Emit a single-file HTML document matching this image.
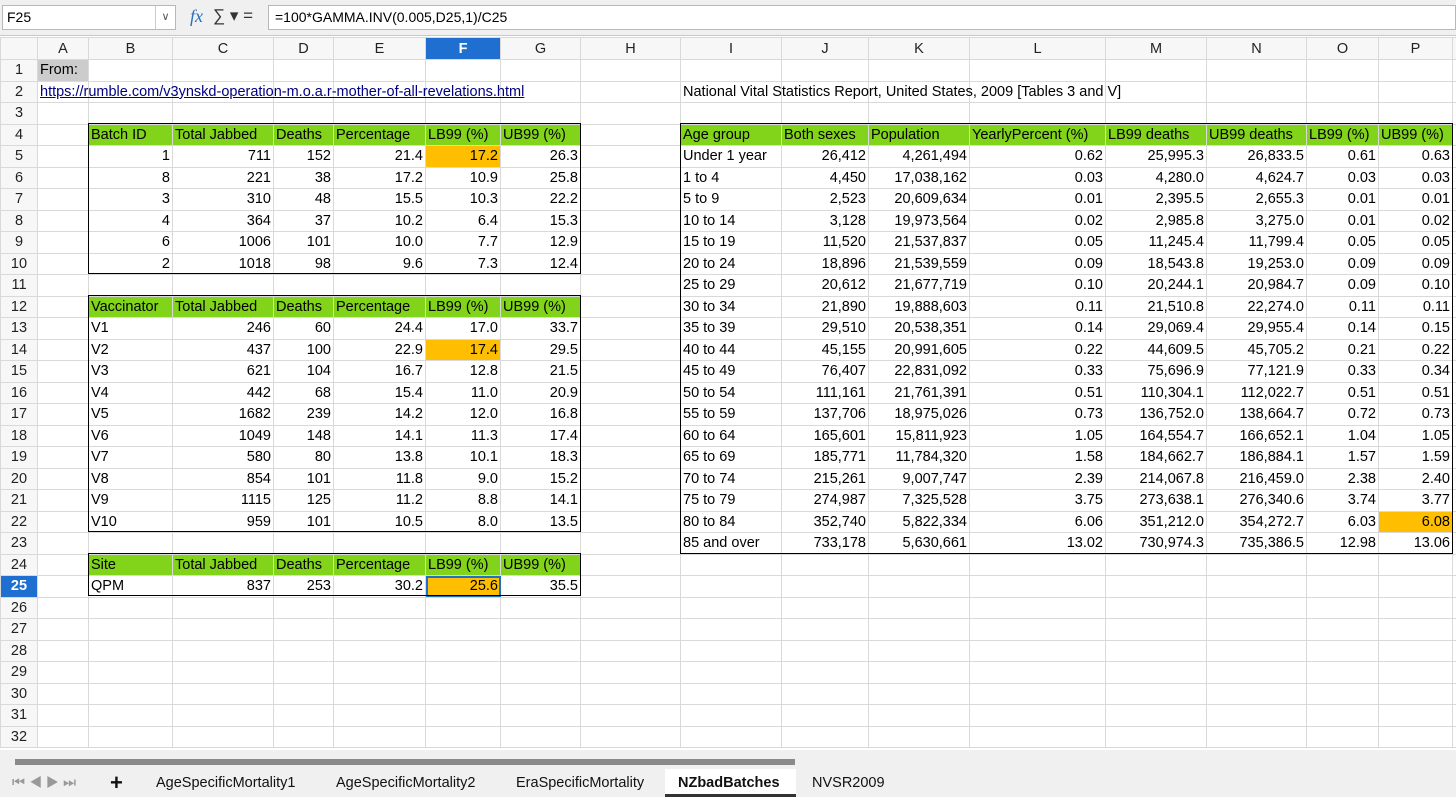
<!DOCTYPE html>
<html><head><meta charset="utf-8"><style>
*{box-sizing:border-box;margin:0;padding:0}
body{width:1456px;height:797px;overflow:hidden;background:#fff;font-family:"Liberation Sans",sans-serif;font-size:14.5px;color:#000;position:relative}
.fb{position:absolute;left:0;top:0;width:1456px;height:36px;background:#f0f0f0;border-bottom:1px solid #c8c8c8}
.nb{position:absolute;left:2px;top:5px;width:174px;height:25px;background:#fff;border:1px solid #b8b8b8;padding:3px 4px;font-size:14px}
.nb span{position:absolute;right:0;top:0;width:20px;height:23px;border-left:1px solid #ccc;text-align:center;font-size:11px;line-height:23px;color:#555}
.fx{position:absolute;left:190px;top:6px;font-family:"Liberation Serif",serif;font-style:italic;color:#2a6ebd;font-size:18px}
.sg{position:absolute;left:213px;top:6px;font-size:17px;color:#333}
.fi{position:absolute;left:268px;top:5px;right:0;height:25px;background:#fff;border:1px solid #b8b8b8;padding:3px 6px;font-size:14px}
table{position:absolute;left:0;top:37px;border-collapse:collapse;table-layout:fixed;width:1462px}
td{height:21.5px;border:1px solid #d9d9d9;padding:0 2px;white-space:nowrap;overflow:visible;line-height:20px}
tr.h td{height:22px;text-align:center;background:#f7f7f7;color:#222}
td.rn{text-align:center;background:#f7f7f7;color:#222}
td.sel{background:#1f6fd1!important;color:#fff!important;font-weight:bold}
td.r{text-align:right}
td.g{background:#81d41a}
td.o{background:#ffbf00}
.bx{position:absolute;border:1.5px solid #000;pointer-events:none}
a{color:#000080;text-decoration:underline}
.tabs{position:absolute;left:0;top:750px;width:1456px;height:47px;background:#f0f0f0}
.sb{position:absolute;left:15px;top:9px;width:780px;height:6px;background:#8a8a8a}
.t{position:absolute;top:25px;font-size:14.5px;color:#111}
</style></head><body>
<div class="fb"><div class="nb">F25<span>∨</span></div><div class="fx">fx</div><div class="sg">∑ ▾ =</div><div class="fi">=100*GAMMA.INV(0.005,D25,1)/C25</div></div>
<table>
<colgroup><col style="width:37px"><col style="width:51px"><col style="width:84px"><col style="width:101px"><col style="width:60px"><col style="width:92px"><col style="width:75px"><col style="width:80px"><col style="width:100px"><col style="width:101px"><col style="width:87px"><col style="width:101px"><col style="width:136px"><col style="width:101px"><col style="width:100px"><col style="width:72px"><col style="width:74px"><col style="width:10px"></colgroup>
<tr class="h"><td></td><td>A</td><td>B</td><td>C</td><td>D</td><td>E</td><td class="sel">F</td><td>G</td><td>H</td><td>I</td><td>J</td><td>K</td><td>L</td><td>M</td><td>N</td><td>O</td><td>P</td><td></td></tr>
<tr><td class="rn">1</td><td style="background:#ccc">From:</td><td></td><td></td><td></td><td></td><td></td><td></td><td></td><td></td><td></td><td></td><td></td><td></td><td></td><td></td><td></td><td></td></tr>
<tr><td class="rn">2</td><td><a>https://rumble.com/v3ynskd-operation-m.o.a.r-mother-of-all-revelations.html</a></td><td></td><td></td><td></td><td></td><td></td><td></td><td></td><td>National Vital Statistics Report, United States, 2009 [Tables 3 and V]</td><td></td><td></td><td></td><td></td><td></td><td></td><td></td><td></td></tr>
<tr><td class="rn">3</td><td></td><td></td><td></td><td></td><td></td><td></td><td></td><td></td><td></td><td></td><td></td><td></td><td></td><td></td><td></td><td></td><td></td></tr>
<tr><td class="rn">4</td><td></td><td class="g">Batch ID</td><td class="g">Total Jabbed</td><td class="g">Deaths</td><td class="g">Percentage</td><td class="g">LB99 (%)</td><td class="g">UB99 (%)</td><td></td><td class="g">Age group</td><td class="g">Both sexes</td><td class="g">Population</td><td class="g">YearlyPercent (%)</td><td class="g">LB99 deaths</td><td class="g">UB99 deaths</td><td class="g">LB99 (%)</td><td class="g">UB99 (%)</td><td></td></tr>
<tr><td class="rn">5</td><td></td><td class="r">1</td><td class="r">711</td><td class="r">152</td><td class="r">21.4</td><td class="r o">17.2</td><td class="r">26.3</td><td></td><td>Under 1 year</td><td class="r">26,412</td><td class="r">4,261,494</td><td class="r">0.62</td><td class="r">25,995.3</td><td class="r">26,833.5</td><td class="r">0.61</td><td class="r">0.63</td><td></td></tr>
<tr><td class="rn">6</td><td></td><td class="r">8</td><td class="r">221</td><td class="r">38</td><td class="r">17.2</td><td class="r">10.9</td><td class="r">25.8</td><td></td><td>1 to 4</td><td class="r">4,450</td><td class="r">17,038,162</td><td class="r">0.03</td><td class="r">4,280.0</td><td class="r">4,624.7</td><td class="r">0.03</td><td class="r">0.03</td><td></td></tr>
<tr><td class="rn">7</td><td></td><td class="r">3</td><td class="r">310</td><td class="r">48</td><td class="r">15.5</td><td class="r">10.3</td><td class="r">22.2</td><td></td><td>5 to 9</td><td class="r">2,523</td><td class="r">20,609,634</td><td class="r">0.01</td><td class="r">2,395.5</td><td class="r">2,655.3</td><td class="r">0.01</td><td class="r">0.01</td><td></td></tr>
<tr><td class="rn">8</td><td></td><td class="r">4</td><td class="r">364</td><td class="r">37</td><td class="r">10.2</td><td class="r">6.4</td><td class="r">15.3</td><td></td><td>10 to 14</td><td class="r">3,128</td><td class="r">19,973,564</td><td class="r">0.02</td><td class="r">2,985.8</td><td class="r">3,275.0</td><td class="r">0.01</td><td class="r">0.02</td><td></td></tr>
<tr><td class="rn">9</td><td></td><td class="r">6</td><td class="r">1006</td><td class="r">101</td><td class="r">10.0</td><td class="r">7.7</td><td class="r">12.9</td><td></td><td>15 to 19</td><td class="r">11,520</td><td class="r">21,537,837</td><td class="r">0.05</td><td class="r">11,245.4</td><td class="r">11,799.4</td><td class="r">0.05</td><td class="r">0.05</td><td></td></tr>
<tr><td class="rn">10</td><td></td><td class="r">2</td><td class="r">1018</td><td class="r">98</td><td class="r">9.6</td><td class="r">7.3</td><td class="r">12.4</td><td></td><td>20 to 24</td><td class="r">18,896</td><td class="r">21,539,559</td><td class="r">0.09</td><td class="r">18,543.8</td><td class="r">19,253.0</td><td class="r">0.09</td><td class="r">0.09</td><td></td></tr>
<tr><td class="rn">11</td><td></td><td></td><td></td><td></td><td></td><td></td><td></td><td></td><td>25 to 29</td><td class="r">20,612</td><td class="r">21,677,719</td><td class="r">0.10</td><td class="r">20,244.1</td><td class="r">20,984.7</td><td class="r">0.09</td><td class="r">0.10</td><td></td></tr>
<tr><td class="rn">12</td><td></td><td class="g">Vaccinator</td><td class="g">Total Jabbed</td><td class="g">Deaths</td><td class="g">Percentage</td><td class="g">LB99 (%)</td><td class="g">UB99 (%)</td><td></td><td>30 to 34</td><td class="r">21,890</td><td class="r">19,888,603</td><td class="r">0.11</td><td class="r">21,510.8</td><td class="r">22,274.0</td><td class="r">0.11</td><td class="r">0.11</td><td></td></tr>
<tr><td class="rn">13</td><td></td><td>V1</td><td class="r">246</td><td class="r">60</td><td class="r">24.4</td><td class="r">17.0</td><td class="r">33.7</td><td></td><td>35 to 39</td><td class="r">29,510</td><td class="r">20,538,351</td><td class="r">0.14</td><td class="r">29,069.4</td><td class="r">29,955.4</td><td class="r">0.14</td><td class="r">0.15</td><td></td></tr>
<tr><td class="rn">14</td><td></td><td>V2</td><td class="r">437</td><td class="r">100</td><td class="r">22.9</td><td class="r o">17.4</td><td class="r">29.5</td><td></td><td>40 to 44</td><td class="r">45,155</td><td class="r">20,991,605</td><td class="r">0.22</td><td class="r">44,609.5</td><td class="r">45,705.2</td><td class="r">0.21</td><td class="r">0.22</td><td></td></tr>
<tr><td class="rn">15</td><td></td><td>V3</td><td class="r">621</td><td class="r">104</td><td class="r">16.7</td><td class="r">12.8</td><td class="r">21.5</td><td></td><td>45 to 49</td><td class="r">76,407</td><td class="r">22,831,092</td><td class="r">0.33</td><td class="r">75,696.9</td><td class="r">77,121.9</td><td class="r">0.33</td><td class="r">0.34</td><td></td></tr>
<tr><td class="rn">16</td><td></td><td>V4</td><td class="r">442</td><td class="r">68</td><td class="r">15.4</td><td class="r">11.0</td><td class="r">20.9</td><td></td><td>50 to 54</td><td class="r">111,161</td><td class="r">21,761,391</td><td class="r">0.51</td><td class="r">110,304.1</td><td class="r">112,022.7</td><td class="r">0.51</td><td class="r">0.51</td><td></td></tr>
<tr><td class="rn">17</td><td></td><td>V5</td><td class="r">1682</td><td class="r">239</td><td class="r">14.2</td><td class="r">12.0</td><td class="r">16.8</td><td></td><td>55 to 59</td><td class="r">137,706</td><td class="r">18,975,026</td><td class="r">0.73</td><td class="r">136,752.0</td><td class="r">138,664.7</td><td class="r">0.72</td><td class="r">0.73</td><td></td></tr>
<tr><td class="rn">18</td><td></td><td>V6</td><td class="r">1049</td><td class="r">148</td><td class="r">14.1</td><td class="r">11.3</td><td class="r">17.4</td><td></td><td>60 to 64</td><td class="r">165,601</td><td class="r">15,811,923</td><td class="r">1.05</td><td class="r">164,554.7</td><td class="r">166,652.1</td><td class="r">1.04</td><td class="r">1.05</td><td></td></tr>
<tr><td class="rn">19</td><td></td><td>V7</td><td class="r">580</td><td class="r">80</td><td class="r">13.8</td><td class="r">10.1</td><td class="r">18.3</td><td></td><td>65 to 69</td><td class="r">185,771</td><td class="r">11,784,320</td><td class="r">1.58</td><td class="r">184,662.7</td><td class="r">186,884.1</td><td class="r">1.57</td><td class="r">1.59</td><td></td></tr>
<tr><td class="rn">20</td><td></td><td>V8</td><td class="r">854</td><td class="r">101</td><td class="r">11.8</td><td class="r">9.0</td><td class="r">15.2</td><td></td><td>70 to 74</td><td class="r">215,261</td><td class="r">9,007,747</td><td class="r">2.39</td><td class="r">214,067.8</td><td class="r">216,459.0</td><td class="r">2.38</td><td class="r">2.40</td><td></td></tr>
<tr><td class="rn">21</td><td></td><td>V9</td><td class="r">1115</td><td class="r">125</td><td class="r">11.2</td><td class="r">8.8</td><td class="r">14.1</td><td></td><td>75 to 79</td><td class="r">274,987</td><td class="r">7,325,528</td><td class="r">3.75</td><td class="r">273,638.1</td><td class="r">276,340.6</td><td class="r">3.74</td><td class="r">3.77</td><td></td></tr>
<tr><td class="rn">22</td><td></td><td>V10</td><td class="r">959</td><td class="r">101</td><td class="r">10.5</td><td class="r">8.0</td><td class="r">13.5</td><td></td><td>80 to 84</td><td class="r">352,740</td><td class="r">5,822,334</td><td class="r">6.06</td><td class="r">351,212.0</td><td class="r">354,272.7</td><td class="r">6.03</td><td class="r o">6.08</td><td></td></tr>
<tr><td class="rn">23</td><td></td><td></td><td></td><td></td><td></td><td></td><td></td><td></td><td>85 and over</td><td class="r">733,178</td><td class="r">5,630,661</td><td class="r">13.02</td><td class="r">730,974.3</td><td class="r">735,386.5</td><td class="r">12.98</td><td class="r">13.06</td><td></td></tr>
<tr><td class="rn">24</td><td></td><td class="g">Site</td><td class="g">Total Jabbed</td><td class="g">Deaths</td><td class="g">Percentage</td><td class="g">LB99 (%)</td><td class="g">UB99 (%)</td><td></td><td></td><td></td><td></td><td></td><td></td><td></td><td></td><td></td><td></td></tr>
<tr><td class="rn sel">25</td><td></td><td>QPM</td><td class="r">837</td><td class="r">253</td><td class="r">30.2</td><td class="r o" style="outline:2px solid #1f6fd1;outline-offset:-2px">25.6</td><td class="r">35.5</td><td></td><td></td><td></td><td></td><td></td><td></td><td></td><td></td><td></td><td></td></tr>
<tr><td class="rn">26</td><td></td><td></td><td></td><td></td><td></td><td></td><td></td><td></td><td></td><td></td><td></td><td></td><td></td><td></td><td></td><td></td><td></td></tr>
<tr><td class="rn">27</td><td></td><td></td><td></td><td></td><td></td><td></td><td></td><td></td><td></td><td></td><td></td><td></td><td></td><td></td><td></td><td></td><td></td></tr>
<tr><td class="rn">28</td><td></td><td></td><td></td><td></td><td></td><td></td><td></td><td></td><td></td><td></td><td></td><td></td><td></td><td></td><td></td><td></td><td></td></tr>
<tr><td class="rn">29</td><td></td><td></td><td></td><td></td><td></td><td></td><td></td><td></td><td></td><td></td><td></td><td></td><td></td><td></td><td></td><td></td><td></td></tr>
<tr><td class="rn">30</td><td></td><td></td><td></td><td></td><td></td><td></td><td></td><td></td><td></td><td></td><td></td><td></td><td></td><td></td><td></td><td></td><td></td></tr>
<tr><td class="rn">31</td><td></td><td></td><td></td><td></td><td></td><td></td><td></td><td></td><td></td><td></td><td></td><td></td><td></td><td></td><td></td><td></td><td></td></tr>
<tr><td class="rn">32</td><td></td><td></td><td></td><td></td><td></td><td></td><td></td><td></td><td></td><td></td><td></td><td></td><td></td><td></td><td></td><td></td><td></td></tr>
</table>
<div class="bx" style="left:88px;top:123px;width:493px;height:151px"></div>
<div class="bx" style="left:88px;top:295px;width:493px;height:237px"></div>
<div class="bx" style="left:88px;top:553px;width:493px;height:43px"></div>
<div class="bx" style="left:680px;top:123px;width:773px;height:431px"></div>
<div class="tabs"><div class="sb"></div>
<div class="t" style="left:12px;color:#999">⏮ ◀ ▶ ⏭</div>
<div class="t" style="left:110px;top:20px;font-size:22px;font-weight:bold">+</div>
<div class="t" style="left:156px">AgeSpecificMortality1</div>
<div class="t" style="left:336px">AgeSpecificMortality2</div>
<div class="t" style="left:516px">EraSpecificMortality</div>
<div style="position:absolute;left:665px;top:19px;width:131px;height:28px;background:#fff;border-bottom:3px solid #333"></div>
<div class="t" style="left:678px;font-weight:bold">NZbadBatches</div>
<div class="t" style="left:812px">NVSR2009</div>
</div>
</body></html>
